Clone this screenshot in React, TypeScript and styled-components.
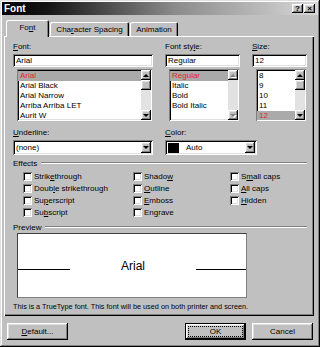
import React from 'react';
import styled, { createGlobalStyle, css } from 'styled-components';

const GlobalStyle = createGlobalStyle`
  html, body {
    margin: 0;
    padding: 0;
    background: #c0c0c0;
  }
  body {
    font-family: "Liberation Sans", Arial, sans-serif;
    font-size: 8px;
    color: #000;
  }
`;

const raised = css`
  background: #c0c0c0;
  box-shadow: inset -1px -1px #000, inset 1px 1px #fff, inset -2px -2px #808080, inset 2px 2px #dfdfdf;
`;

const sunken = css`
  background: #fff;
  box-shadow: inset 1px 1px #808080, inset -1px -1px #fff, inset 2px 2px #000, inset -2px -2px #dfdfdf;
`;

const Window = styled.div`
  width: 320px;
  height: 347px;
  box-sizing: border-box;
  padding: 2px;
  background: #c0c0c0;
  box-shadow: inset -1px -1px #000, inset 1px 1px #dfdfdf, inset -2px -2px #808080, inset 2px 2px #fff;
  display: flex;
  flex-direction: column;
`;

const TitleBar = styled.div`
  height: 13px;
  display: flex;
  align-items: center;
  justify-content: space-between;
  padding: 0 3px 0 2px;
  background: linear-gradient(90deg, #000 0%, #141414 14%, #8c8c8c 55%, #d8d8d8 100%);
`;

const TitleText = styled.span`
  color: #fff;
  font-weight: bold;
  font-size: 10px;
`;

const TitleButtons = styled.div`
  display: flex;
  gap: 1px;
`;

const TitleButton = styled.div`
  ${raised};
  width: 11px;
  height: 9px;
  display: flex;
  align-items: center;
  justify-content: center;
  font-size: 8px;
  font-weight: bold;
  line-height: 9px;
`;

const TabRow = styled.div`
  height: 21px;
  display: flex;
  align-items: flex-end;
  gap: 1px;
  padding-left: 4px;
`;

const Tab = styled.div<{ $active?: boolean; $w: number }>`
  position: relative;
  width: ${p => p.$w}px;
  height: ${p => (p.$active ? 17 : 14)}px;
  margin-bottom: ${p => (p.$active ? -1 : 0)}px;
  box-sizing: border-box;
  padding-bottom: ${p => (p.$active ? 2 : 0)}px;
  display: flex;
  align-items: center;
  justify-content: center;
  background: #c0c0c0;
  border-radius: 2px 2px 0 0;
  box-shadow: inset 1px 1px #fff, inset -1px 0 #000, inset -2px 0 #808080;
  white-space: nowrap;
`;

const Panel = styled.div`
  margin-left: 2px;
  width: 310px;
  height: 280px;
  box-sizing: border-box;
  padding: 6px 7px 0 9px;
  box-shadow: inset 1px 1px #fff, inset -1px -1px #000, inset -2px -2px #808080;
  display: flex;
  flex-direction: column;
`;

const FontGrid = styled.div`
  display: grid;
  grid-template-columns: 140px 75px 55px;
  column-gap: 12px;
`;

const Field = styled.div`
  display: flex;
  flex-direction: column;
`;

const Label = styled.div`
  height: 10px;
  line-height: 10px;
  white-space: nowrap;
`;

const TextBox = styled.div`
  ${sunken};
  margin-top: 2px;
  height: 13px;
  line-height: 13px;
  padding-left: 3px;
`;

const ListBox = styled.div`
  ${sunken};
  margin: 2px 1px 0 4px;
  height: 52px;
  box-sizing: border-box;
  padding: 1px;
  display: flex;
`;

const ListItems = styled.div`
  flex: 1;
  display: flex;
  flex-direction: column;
  overflow: hidden;
  padding-top: 1px;
`;

const ListItem = styled.div<{ $selected?: boolean }>`
  height: 10px;
  line-height: 10px;
  padding-left: 2px;
  white-space: nowrap;
  background: ${p => (p.$selected ? '#aaaaaa' : 'transparent')};
  color: ${p => (p.$selected ? '#e02828' : '#000')};
`;

const ScrollBar = styled.div`
  width: 10px;
  display: flex;
  flex-direction: column;
  background: #e2e2e2;
`;

const ScrollButton = styled.div`
  ${raised};
  height: 10px;
  display: flex;
  align-items: center;
  justify-content: center;
`;

const Track = styled.div`
  flex: 1;
`;

const Arrow = styled.div<{ $down?: boolean; $disabled?: boolean }>`
  width: 0;
  height: 0;
  border-left: 3px solid transparent;
  border-right: 3px solid transparent;
  ${p =>
    p.$down
      ? `border-top: 3px solid ${p.$disabled ? '#808080' : '#000'};`
      : `border-bottom: 3px solid ${p.$disabled ? '#808080' : '#000'};`}
  ${p => p.$disabled && 'filter: drop-shadow(1px 1px 0 #fff);'}
`;

const DropRow = styled.div`
  margin-top: 7px;
  display: flex;
  gap: 12px;
`;

const Dropdown = styled.div<{ $w: number }>`
  ${sunken};
  margin-top: 2px;
  width: ${p => p.$w}px;
  height: 15px;
  box-sizing: border-box;
  padding: 2px;
  display: flex;
  align-items: center;
`;

const DropText = styled.span`
  flex: 1;
  padding-left: 1px;
`;

const Swatch = styled.div`
  width: 11px;
  height: 10px;
  margin: 0 6px 0 1px;
  background: #000;
`;

const DropButton = styled(ScrollButton)`
  width: 10px;
  height: 11px;
`;

const GroupHeader = styled.div<{ $top: number }>`
  margin-top: ${p => p.$top}px;
  height: 10px;
  display: flex;
  align-items: center;
`;

const GroupLine = styled.div`
  flex: 1;
  margin-left: 4px;
  border-top: 1px solid #808080;
  border-bottom: 1px solid #fff;
`;

const EffectsGrid = styled.div`
  margin-top: 2px;
  padding-left: 10px;
  display: grid;
  grid-template-columns: 110px 97px 1fr;
  grid-template-rows: repeat(4, 12px);
  grid-auto-flow: column;
`;

const CheckItem = styled.div`
  display: flex;
  align-items: center;
  gap: 2px;
  white-space: nowrap;
`;

const CheckBox = styled.div`
  width: 9px;
  height: 9px;
  background: #fff;
  box-shadow: inset 1px 1px #808080, inset -1px -1px #fff, inset 2px 2px #000, inset -2px -2px #dfdfdf;
`;

const PreviewBox = styled.div`
  margin: 1px 0 0 4px;
  width: 230px;
  height: 65px;
  box-sizing: border-box;
  background: #fff;
  border: 1px solid;
  border-color: #404040 #808080 #808080 #404040;
  display: flex;
  align-items: center;
`;

const PreviewRow = styled.div`
  width: 100%;
  display: flex;
  align-items: baseline;
  justify-content: space-between;
`;

const PreviewLine = styled.div<{ $w: number }>`
  width: ${p => p.$w}px;
  height: 1px;
  background: #000;
`;

const PreviewText = styled.span`
  font-size: 12px;
  line-height: 14px;
`;

const Note = styled.div`
  margin-top: 4px;
  height: 10px;
  line-height: 10px;
  font-size: 7.3px;
  white-space: nowrap;
`;

const ButtonRow = styled.div`
  margin: 7px 5px 0 5px;
  display: flex;
  gap: 6px;
`;

const Spacer = styled.div`
  flex: 1;
`;

const Button = styled.div<{ $primary?: boolean }>`
  ${raised};
  width: 61px;
  height: 17px;
  box-sizing: border-box;
  display: flex;
  align-items: center;
  justify-content: center;
  ${p =>
    p.$primary &&
    css`
      border: 1px solid #000;
      outline: 1px dotted #000;
      outline-offset: -4px;
    `}
`;

const fonts = ['Arial', 'Arial Black', 'Arial Narrow', 'Arriba Arriba LET', 'Aurit W'];
const styles = ['Regular', 'Italic', 'Bold', 'Bold Italic'];
const sizes = ['8', '9', '10', '11', '12'];

const effects: [string, number][] = [
  ['Strikethrough', 5],
  ['Double strikethrough', 4],
  ['Superscript', 2],
  ['Subscript', 2],
  ['Shadow', 5],
  ['Outline', 0],
  ['Emboss', 0],
  ['Engrave', 2],
  ['Small caps', 1],
  ['All caps', 0],
  ['Hidden', 0],
];

const Keyed: React.FC<{ text: string; at: number }> = ({ text, at }) => (
  <>
    {text.slice(0, at)}
    <u>{text[at]}</u>
    {text.slice(at + 1)}
  </>
);

const List: React.FC<{ items: string[]; selected: number; disabled?: boolean }> = ({ items, selected, disabled }) => (
  <ListBox>
    <ListItems>
      {items.map((it, i) => (
        <ListItem key={it} $selected={i === selected}>
          {it}
        </ListItem>
      ))}
    </ListItems>
    <ScrollBar>
      <ScrollButton>
        <Arrow $disabled={disabled} />
      </ScrollButton>
      {!disabled && <ScrollButton />}
      <Track />
      <ScrollButton>
        <Arrow $down $disabled={disabled} />
      </ScrollButton>
    </ScrollBar>
  </ListBox>
);

const App: React.FC = () => {
  return (
    <>
      <GlobalStyle />
      <Window>
        <TitleBar>
          <TitleText>Font</TitleText>
          <TitleButtons>
            <TitleButton>?</TitleButton>
            <TitleButton>×</TitleButton>
          </TitleButtons>
        </TitleBar>

        <TabRow>
          <Tab $active $w={43}>
            <Keyed text="Font" at={2} />
          </Tab>
          <Tab $w={79}>
            <Keyed text="Character Spacing" at={3} />
          </Tab>
          <Tab $w={48}>
            Animation
          </Tab>
        </TabRow>

        <Panel>
          <FontGrid>
            <Field>
              <Label>
                <Keyed text="Font:" at={0} />
              </Label>
              <TextBox>Arial</TextBox>
              <List items={fonts} selected={0} />
            </Field>
            <Field>
              <Label>
                <Keyed text="Font style:" at={8} />
              </Label>
              <TextBox>Regular</TextBox>
              <List items={styles} selected={0} disabled />
            </Field>
            <Field>
              <Label>
                <Keyed text="Size:" at={0} />
              </Label>
              <TextBox>12</TextBox>
              <List items={sizes} selected={4} />
            </Field>
          </FontGrid>

          <DropRow>
            <Field>
              <Label>
                <Keyed text="Underline:" at={0} />
              </Label>
              <Dropdown $w={140}>
                <DropText>(none)</DropText>
                <DropButton>
                  <Arrow $down />
                </DropButton>
              </Dropdown>
            </Field>
            <Field>
              <Label>
                <Keyed text="Color:" at={0} />
              </Label>
              <Dropdown $w={92}>
                <Swatch />
                <DropText>Auto</DropText>
                <DropButton>
                  <Arrow $down />
                </DropButton>
              </Dropdown>
            </Field>
          </DropRow>

          <GroupHeader $top={3}>
            Effects
            <GroupLine />
          </GroupHeader>
          <EffectsGrid>
            {effects.map(([name, at]) => (
              <CheckItem key={name}>
                <CheckBox />
                <span>
                  <Keyed text={name} at={at} />
                </span>
              </CheckItem>
            ))}
          </EffectsGrid>

          <GroupHeader $top={4}>
            Preview
            <GroupLine />
          </GroupHeader>
          <PreviewBox>
            <PreviewRow>
              <PreviewLine $w={52} />
              <PreviewText>Arial</PreviewText>
              <PreviewLine $w={50} />
            </PreviewRow>
          </PreviewBox>
          <Note>This is a TrueType font. This font will be used on both printer and screen.</Note>
        </Panel>

        <ButtonRow>
          <Button>
            <Keyed text="Default..." at={0} />
          </Button>
          <Spacer />
          <Button $primary>OK</Button>
          <Button>Cancel</Button>
        </ButtonRow>
      </Window>
    </>
  );
};

export default App;
